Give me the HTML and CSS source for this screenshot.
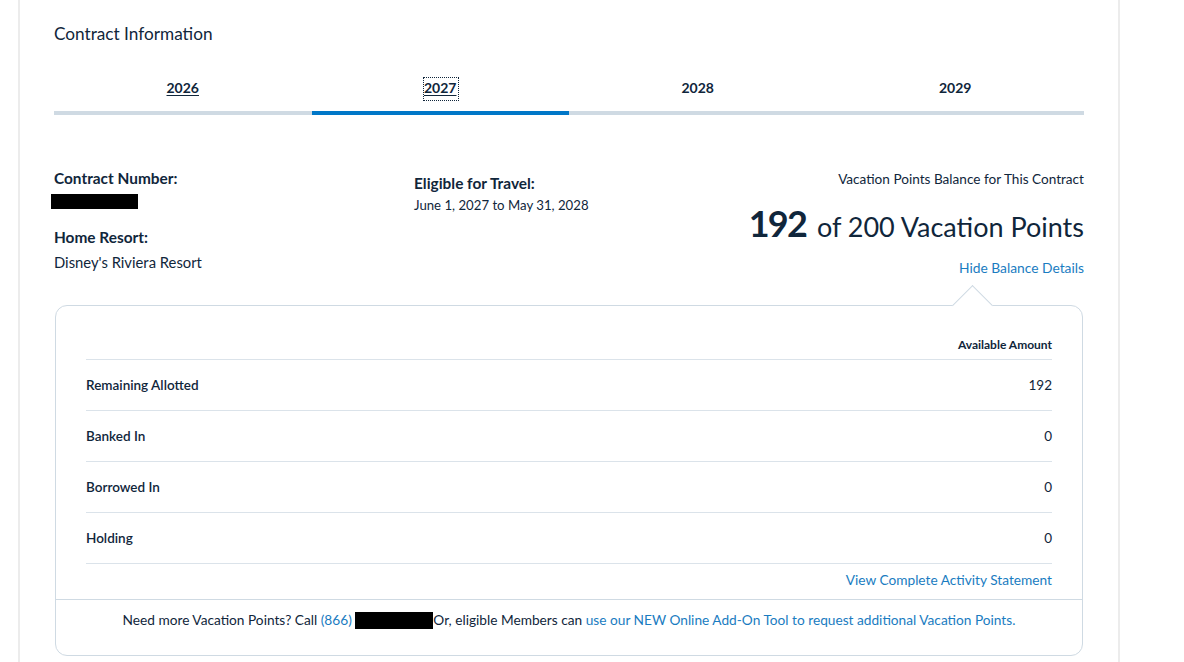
FILE: index.html
```html
<!DOCTYPE html>
<html lang="en">
<head>
  <meta charset="UTF-8" />
  <meta name="viewport" content="width=device-width, initial-scale=1.0"/>
  <title>Contract Information</title>
  <link rel="stylesheet" href="styles.css">
</head>
<body>
  <div class="panel">
    <h2 class="title">Contract Information</h2>

    <div class="tabs">
      <a class="tab link" href="#">2026</a>
      <a class="tab link active focused" href="#">2027</a>
      <span class="tab">2028</span>
      <span class="tab">2029</span>
    </div>

    <div class="info">
      <div class="col">
        <div class="label">Contract Number:</div>
        <div class="redact contract-no"></div>
        <div class="label home">Home Resort:</div>
        <div class="value">Disney's Riviera Resort</div>
      </div>

      <div class="col travel">
        <div class="label">Eligible for Travel:</div>
        <div class="value small">June 1, 2027 to May 31, 2028</div>
      </div>

      <div class="col balance">
        <div class="balance-label">Vacation Points Balance for This Contract</div>
        <div class="points"><strong>192</strong> of 200 Vacation Points</div>
        <a class="blue-link toggle" href="#">Hide Balance Details</a>
      </div>
    </div>

    <div class="details">
      <div class="details-inner">
        <div class="head-row">Available Amount</div>
        <div class="row"><span class="row-name">Remaining Allotted</span><span>192</span></div>
        <div class="row"><span class="row-name">Banked In</span><span>0</span></div>
        <div class="row"><span class="row-name">Borrowed In</span><span>0</span></div>
        <div class="row"><span class="row-name">Holding</span><span>0</span></div>
        <div class="statement"><a class="blue-link" href="#">View Complete Activity Statement</a></div>
      </div>
      <div class="footer">
        Need more Vacation Points? Call <a class="blue-link" href="#">(866)</a> <span class="redact phone"></span>Or, eligible Members can <a class="blue-link" href="#">use our NEW Online Add-On Tool to request additional Vacation Points.</a>
      </div>
    </div>
  </div>
</body>
</html>
```

FILE: styles.css
```css
* {
  box-sizing: border-box;
}

body {
  margin: 0;
  background: #fff;
  font-family: Lato, 'Open Sans', sans-serif;
  color: #10263b;
}

.panel {
  width: 1102px;
  margin-left: 18px;
  padding: 23px 34px 0;
  min-height: 662px;
  border-left: 2px solid #ececec;
  border-right: 2px solid #ececec;
}

.title {
  margin: 0;
  font-size: 17.2px;
  line-height: 22px;
  font-weight: normal;
}

.tabs {
  display: grid;
  grid-template-columns: repeat(4, 1fr);
  margin-top: 28px;
}

.tab {
  position: relative;
  display: block;
  text-align: center;
  padding: 6px 0 14px;
  font-size: 14px;
  line-height: 18px;
  font-weight: bold;
  color: #10263b;
  border-bottom: 4px solid #cfdae3;
  text-decoration: none;
}

.tab.link {
  text-decoration: underline;
  text-underline-offset: 2px;
}

.tab.active {
  border-bottom-color: #0077c8;
}

/* keyboard focus ring on the selected year */
.tab.focused::after {
  content: "";
  position: absolute;
  left: calc(50% - 17px);
  top: 4px;
  width: 34px;
  height: 22px;
  border: 1px dotted #10263b;
}

.info {
  display: grid;
  grid-template-columns: 360px 1fr auto;
  padding-top: 53px;
}

.label {
  font-size: 15.4px;
  line-height: 20px;
  font-weight: bold;
}

.value {
  margin-top: 5px;
  font-size: 14.8px;
  line-height: 20px;
}

.value.small {
  margin-top: 2px;
  font-size: 13.2px;
}

.redact {
  display: inline-block;
  background: #000;
}

.contract-no {
  display: block;
  width: 87px;
  height: 15px;
  margin: 6px 0 0 -3px;
}

.home {
  margin-top: 18px;
}

.travel {
  padding-top: 5px;
}

.balance {
  text-align: right;
}

.balance-label {
  margin-top: 2px;
  font-size: 13.6px;
  line-height: 18px;
}

.points {
  margin-top: 12px;
  font-size: 27px;
  line-height: 46px;
  white-space: nowrap;
}

.points strong {
  font-size: 36px;
  font-weight: bold;
  letter-spacing: -1.8px;
  margin-right: 4px;
}

.blue-link {
  color: #1a7cc1;
  text-decoration: none;
}

.toggle {
  display: block;
  margin-top: 9px;
  font-size: 13.8px;
  line-height: 18px;
}

.details {
  position: relative;
  margin: 28px 1px 0;
  border: 1px solid #cfdae3;
  border-radius: 12px;
  font-size: 13.7px;
}

.details::before {
  content: "";
  position: absolute;
  right: 95px;
  top: -15px;
  width: 28px;
  height: 28px;
  background: #fff;
  border-top: 1px solid #cfdae3;
  border-left: 1px solid #cfdae3;
  transform: rotate(45deg);
}

.details-inner {
  padding: 0 30px;
}

.head-row {
  padding: 30px 0 5px;
  text-align: right;
  font-size: 12px;
  line-height: 18px;
  font-weight: bold;
  border-bottom: 1px solid #dbe3ea;
}

.row {
  display: flex;
  justify-content: space-between;
  padding: 16px 0;
  line-height: 18px;
  font-size: 13.5px;
  border-bottom: 1px solid #dbe3ea;
}

.row-name {
  font-weight: 600;
}

.statement {
  padding: 7px 0 10px;
  text-align: right;
  line-height: 18px;
}

.footer {
  border-top: 1px solid #cfdae3;
  padding: 11px 0 26px;
  text-align: center;
  line-height: 18px;
}

.phone {
  width: 78px;
  height: 17px;
  vertical-align: -4px;
}
```
